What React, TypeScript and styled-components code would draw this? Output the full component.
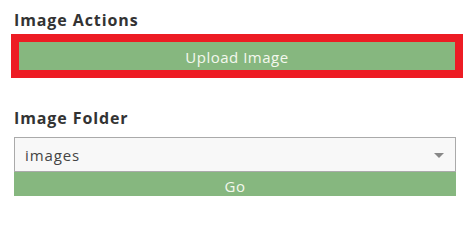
import React from "react";
import styled, { createGlobalStyle } from "styled-components";

const Global = createGlobalStyle`
  html, body { margin: 0; padding: 0; background: #fff; }
  body { font-family: "Open Sans", "Noto Sans", sans-serif; }
`;

const Page = styled.div`
  display: flex;
  flex-direction: column;
  padding: 10px 13px 0 14px;
`;

const Section = styled.section<{ $gap: number; $mb?: number }>`
  display: flex;
  flex-direction: column;
  gap: ${(p) => p.$gap}px;
  margin-bottom: ${(p) => p.$mb ?? 0}px;
`;

const Title = styled.h3`
  margin: 0;
  font-size: 16px;
  line-height: 20px;
  font-weight: 700;
  color: #333;
  letter-spacing: 0.9px;
`;

const Highlight = styled.div`
  border: 8px solid #ed1c24;
  margin: 0 -7px 0 -3px;
  display: flex;
`;

const GreenButton = styled.button<{ $h: number; $pt: number }>`
  flex: 1;
  height: ${(p) => p.$h}px;
  border: 0;
  margin: 0;
  padding: ${(p) => p.$pt}px 0 0;
  background: #86b77f;
  color: #f4f8ee;
  font-family: "Open Sans", "Noto Sans", sans-serif;
  font-size: 15px;
  font-weight: 400;
  letter-spacing: 0.5px;
  cursor: pointer;
`;

const SelectBox = styled.div`
  height: 35px;
  box-sizing: border-box;
  border: 1px solid #aaa;
  background: #f8f8f8;
  display: flex;
  align-items: center;
  justify-content: space-between;
  padding: 1px 10px 0 10px;
  color: #444;
  font-size: 15px;
  letter-spacing: 0.9px;
`;

const Caret = styled.span`
  width: 0;
  height: 0;
  border-left: 5px solid transparent;
  border-right: 5px solid transparent;
  border-top: 5px solid #888;
  margin-right: 1px;
`;

const Stack = styled.div`
  display: flex;
  flex-direction: column;
`;

export default function App() {
  return (
    <>
      <Global />
      <Page>
        <Section $gap={4} $mb={30}>
          <Title>Image Actions</Title>
          <Highlight>
            <GreenButton $h={28} $pt={1}>Upload Image</GreenButton>
          </Highlight>
        </Section>
        <Section $gap={9}>
          <Title>Image Folder</Title>
          <Stack>
            <SelectBox>
              <span>images</span>
              <Caret />
            </SelectBox>
            <GreenButton $h={31} $pt={4}>Go</GreenButton>
          </Stack>
        </Section>
      </Page>
    </>
  );
}
